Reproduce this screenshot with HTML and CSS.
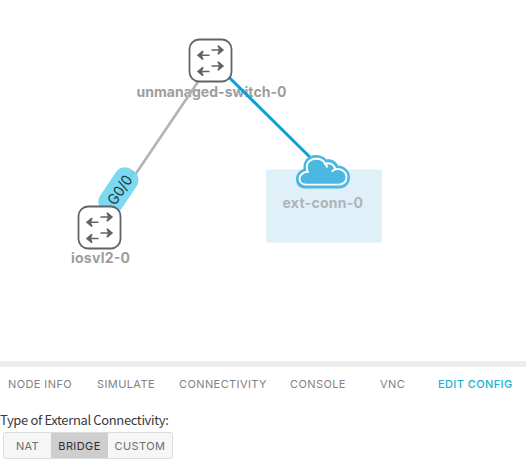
FILE: index.html
```
<!DOCTYPE html>
<html lang="en">
<head>
<meta charset="utf-8">
<title>Topology</title>
<link rel="stylesheet" href="styles.css">
</head>
<body>
<main class="workbench">
  <svg class="canvas" width="526" height="361" viewBox="0 0 526 361">
    <defs>
      <g id="switch">
        <rect x="-21" y="-21" width="42" height="42" rx="9.500" fill="#fff" stroke="#626366" stroke-width="1.800"/>
        <g fill="#626366" stroke="#626366" stroke-width="1.500">
          <path d="M1-10.600H11M7.500-14.800L12.500-10.600L7.500-6.400L9.500-10.600Z"/>
          <path d="M-1-5.200H-11M-7.500-9.400L-12.500-5.200L-7.500-1L-9.500-5.200Z"/>
          <path d="M1 5.500H11M7.500 1.300L12.500 5.500L7.500 9.700L9.500 5.500Z"/>
          <path d="M-1 10.900H-11M-7.500 6.700L-12.500 10.900L-7.500 15.100L-9.500 10.900Z"/>
        </g>
      </g>
    </defs>
    <rect x="266" y="169.500" width="116" height="73" fill="#dff0f8"/>
    <text class="node-label" x="136.500" y="97" textLength="150">unmanaged-switch-0</text>
    <path d="M99.500 227.500L212 61" stroke="#b3b3b5" stroke-width="2.600"/>
    <path d="M212.500 61L325 172" stroke="#0d9fdb" stroke-width="3"/>
    <g transform="translate(119 190) rotate(-56)">
      <rect x="-26" y="-12.500" width="50" height="25" rx="11" fill="#7bdaf2"/>
      <path d="M-26 2H24" stroke="#5eb9cf" stroke-width="2" opacity=".35"/>
      <text class="port-label" x="-15.500" y="6" textLength="32" lengthAdjust="spacingAndGlyphs">G0/0</text>
    </g>
    <use href="#switch" x="210.500" y="60.500"/>
    <use href="#switch" x="99.500" y="227.500"/>
    <path d="M305 188.500C299.500 188.500 296 184.500 296 179.500C296 174 299 170.500 303.500 169C302.500 161 308 155 316 155C320 155 324 156.500 326.500 159.500C331.500 158.500 336 161 338 165.500C344.500 165.500 350 170.500 350 177.500C350 184 345 188.500 339.500 188.500Z" fill="#4bb8e2"/>
    <path d="M306 184.600C302 184.600 299.500 182 299.500 178.800C299.500 175 303 172 307.800 171.800C304.500 163.500 310 158.700 316 158.700C321 158.700 324 161 325 163.800C329.500 162 334.500 164.500 335.200 169.300C341.500 168 346.500 172 346.500 177.300C346.500 181.500 343.500 184.600 339 184.600Z" fill="#4bb8e2" stroke="#fff" stroke-width="1.900"/>
    <path d="M325 163.800C326.300 165 327 166.200 327.300 167.500M335.200 169.300C333.700 169.800 332.600 170.600 331.800 171.600" fill="none" stroke="#fff" stroke-width="1.900"/>
    <text class="node-label" x="71" y="263" textLength="59">iosvl2-0</text>
    <text class="node-label node-label--selected" x="282.500" y="208" textLength="80.500">ext-conn-0</text>
  </svg>
  <section class="panel">
    <nav class="tabs">
      <a class="tab">NODE INFO</a>
      <a class="tab">SIMULATE</a>
      <a class="tab">CONNECTIVITY</a>
      <a class="tab">CONSOLE</a>
      <a class="tab">VNC</a>
      <a class="tab tab--active">EDIT CONFIG</a>
    </nav>
    <p class="caption">Type of External Connectivity:</p>
    <div class="choices">
      <button class="choice">NAT</button>
      <button class="choice choice--on">BRIDGE</button>
      <button class="choice">CUSTOM</button>
    </div>
  </section>
</main>
</body>
</html>
```
FILE: styles.css
```
body {
  margin: 0;
  background: #fff;
  overflow: hidden;
}
.canvas {
  display: block;
}
.node-label {
  font: 700 14px Inter, sans-serif;
  fill: #9c9da0;
}
.node-label--selected {
  fill: #b0b4b7;
}
.port-label {
  font: 15px Inter, sans-serif;
  fill: #203b43;
}
.panel {
  height: 108px;
  border-top: 6px solid #ededed;
}
.tabs {
  display: grid;
  grid-template-columns: 89px 82px 111px 85px 63px 96px;
  height: 35px;
  font: 11px/35px Inter, sans-serif;
  letter-spacing: 0.4px;
  color: #808285;
}
.tab {
  padding-left: 8px;
  white-space: nowrap;
}
.tab:nth-child(5) {
  padding-left: 13px;
}
.tab--active {
  color: #14b2d3;
  font-weight: 500;
}
.caption {
  margin: 7px 0 0;
  font: 13px/22px "Noto Sans CJK SC", sans-serif;
  letter-spacing: -0.36px;
  color: #39393b;
}
.choices {
  display: grid;
  grid-template-columns: 47px 57px 64px;
  box-sizing: border-box;
  width: 170px;
  height: 27px;
  margin: 1px 0 0 3px;
  border: 1px solid #dcdcdc;
  border-radius: 3px;
  overflow: hidden;
}
.choice {
  padding: 0;
  border: 0;
  background: #f6f6f6;
  color: #6d6e71;
  font: 11px Inter, sans-serif;
  letter-spacing: 0.4px;
}
.choice--on {
  background: #cecece;
  color: #303030;
}
```
